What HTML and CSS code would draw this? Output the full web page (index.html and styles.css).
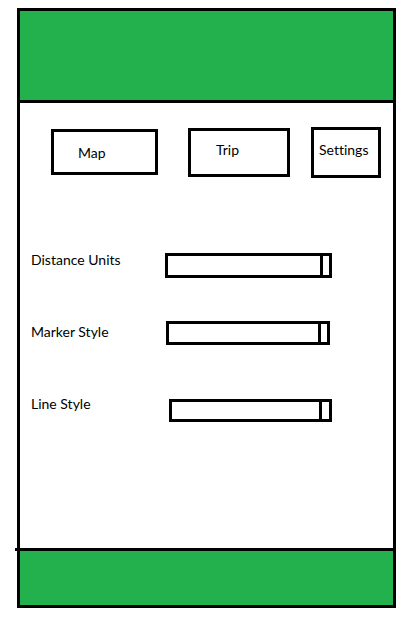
FILE: index.html
```html
<!DOCTYPE html>
<html lang="en">
<head>
<meta charset="utf-8">
<meta name="viewport" content="width=device-width, initial-scale=1">
<title>Settings</title>
<link rel="stylesheet" href="styles.css">
</head>
<body>
<div class="frame">
  <header class="header"></header>
  <main class="main">
    <nav class="tabs">
      <button type="button" class="tab tab-map">Map</button>
      <button type="button" class="tab tab-trip">Trip</button>
      <button type="button" class="tab tab-settings">Settings</button>
    </nav>
    <form class="settings">
      <div class="row">
        <label for="distance">Distance Units</label>
        <select id="distance" class="field field-distance"><option></option></select>
      </div>
      <div class="row">
        <label for="marker">Marker Style</label>
        <select id="marker" class="field field-marker"><option></option></select>
      </div>
      <div class="row">
        <label for="line">Line Style</label>
        <select id="line" class="field field-line"><option></option></select>
      </div>
    </form>
  </main>
  <footer class="footer"></footer>
</div>
</body>
</html>
```
FILE: styles.css
```css
* {
  box-sizing: border-box;
}

body {
  display: flex;
  min-height: 100vh;
  margin: 0;
  padding: 8px 22px 11px 17px;
  background: #fff;
  color: #000;
  font: 14px/20px Lato, sans-serif;
}

.frame {
  flex: 1;
  display: flex;
  flex-direction: column;
  border: 3px solid #000;
}

.header {
  height: 92px;
  background: #22b14c;
  border-bottom: 3px solid #000;
}

.main {
  flex: 1;
}

.tabs {
  display: grid;
  grid-template-columns: 107fr 132fr 91fr;
  align-items: center;
  padding: 24px 12px 0 31px;
}

.tab {
  min-width: 0;
  margin: 0;
  border: 3px solid #000;
  background: #fff;
  color: inherit;
  font: inherit;
  font-variant-ligatures: none;
  text-align: left;
}

.tab-map {
  height: 46px;
  margin-bottom: 1px;
  padding: 2px 0 0 24px;
}

.tab-trip {
  height: 49px;
  margin-left: 30px;
  padding: 0 0 6px 25px;
}

.tab-settings {
  height: 51px;
  margin-left: 21px;
  padding: 0 0 6px 5px;
}

.settings {
  padding: 71px 61px 0 11px;
}

.row {
  display: grid;
  grid-template-columns: 134px 1fr;
  align-items: start;
  height: 72px;
}

.row label {
  padding-top: 1px;
}

.field {
  appearance: none;
  min-width: 0;
  padding: 0;
  border: 3px solid #000;
  border-radius: 0;
  background: #fff linear-gradient(#000, #000) right 6px top / 3px 100% no-repeat;
  font: inherit;
}

.field-distance {
  height: 25px;
  margin-top: 4px;
}

.field-marker {
  height: 24px;
  margin: 0 2px 0 1px;
}

.field-line {
  height: 23px;
  margin: 6px 0 0 4px;
  background-position: right 7px top;
}

.footer {
  position: relative;
  height: 57px;
  background: #22b14c;
  border-top: 3px solid #000;
}

/* The footer rule runs slightly past the frame on the left. */
.footer::before {
  content: "";
  position: absolute;
  top: -3px;
  left: -5px;
  width: 5px;
  height: 3px;
  background: #000;
}
```
